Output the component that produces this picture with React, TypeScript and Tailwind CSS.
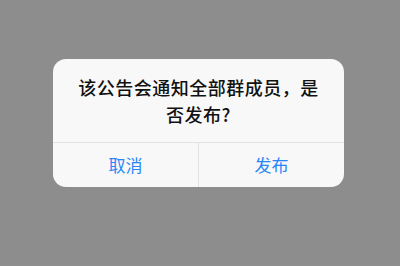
export default function App() {
  return (
    <div
      className="w-[400px] h-[266px] bg-[#8d8d8d] pt-[59px]"
      style={{ fontFamily: '"Noto Sans CJK SC", "Noto Sans", sans-serif' }}
    >
      <div className="ml-[53px] w-[291px] rounded-[13px] bg-[#f8f8f8] overflow-hidden">
        <div className="px-[22px] pt-[15px] pb-[14px] text-center text-[18px] leading-[27px] tracking-[0.5px] font-medium text-[#111]">
          该公告会通知全部群成员，是否发布?
        </div>
        <div className="flex h-[45px] border-t border-[#e2e2e2] text-[17px] text-[#2a86f7]">
          <button className="flex-1 flex items-center justify-center">取消</button>
          <button className="flex-1 flex items-center justify-center border-l border-[#e2e2e2]">发布</button>
        </div>
      </div>
    </div>
  );
}
